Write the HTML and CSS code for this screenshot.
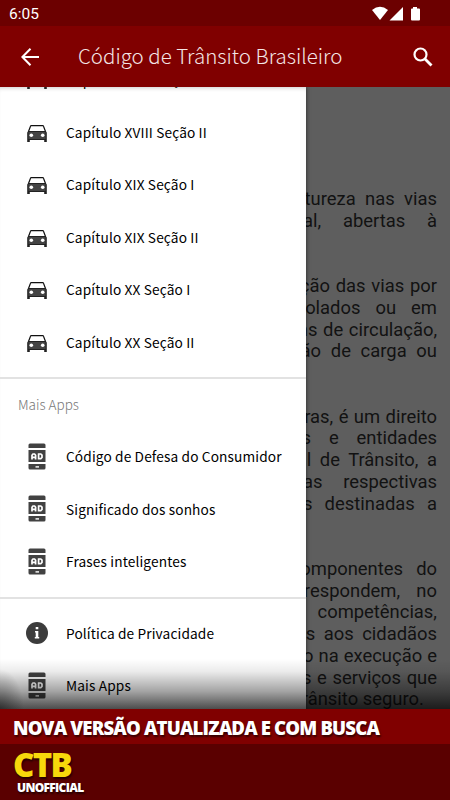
FILE: index.html
```html
<!DOCTYPE html>
<html lang="pt-BR">
<head>
    <meta charset="UTF-8">
    <meta name="viewport" content="width=device-width, initial-scale=1.0">
    <title>Código de Trânsito Brasileiro</title>
    <link rel="stylesheet" href="styles.css">
</head>
<body>
    <!-- shared icons -->
    <svg class="sprite">
        <symbol id="car" viewBox="0 0 20 17">
            <path fill="none" stroke="#111" stroke-width="1.200" d="M1.300 7 3.500 1.300Q3.700.700 4.300.700h11.400q.6 0 .8.6L18.700 7"/>
            <path fill="#222" d="M.2 7.500 1.500 6h17l1.300 1.500V17h-2.600v-2H2.800v2H.2z"/>
            <path fill="#444" d="M1.500 7h17v7h-17z"/>
            <circle cx="4.300" cy="10.200" r="1.800" fill="#fff"/>
            <circle cx="15.700" cy="10.200" r="1.800" fill="#fff"/>
        </symbol>
        <symbol id="ad" viewBox="0 0 18 27">
            <path fill="#424242" d="M.5 5V2Q.5.5 2 .5h14Q17.500.5 17.500 2v3zM.5 7h17v12H.5zM.5 21h17v4q0 1.500-1.500 1.500H2Q.5 26.500.5 25z"/>
            <path fill="none" stroke="#fff" stroke-width="1.700" d="M4 16.500v-4.300l1-1.200h1.600l1 1.200v4.300M4 14.400h3.600M10.600 10.900v4.800h2.200l1.200-1.200v-2.300l-1.200-1.200h-3"/>
            <path fill="#fff" d="M7.500 23.200h3.500v1.400H7.500z"/>
        </symbol>
    </svg>

    <div class="app">
        <div class="status-bar">
            <span>6:05</span>
            <svg class="status-icons" width="50" height="16" viewBox="0 0 50 16" fill="#fff">
                <path d="M0 4Q8-2.500 16 4L8 14z"/>
                <path d="M31 1v13.500H17.500z"/>
                <path d="M41 1h4v1.500h2q1 0 1 1v10q0 1-1 1h-7q-1 0-1-1v-10q0-1 1-1h1z"/>
            </svg>
        </div>
        <header class="toolbar">
            <svg width="18" height="18" viewBox="0 0 18 18" fill="none" stroke="#fff" stroke-width="2">
                <path d="M18 9H1.500M9.500.8 1.400 9l8.100 8.200"/>
            </svg>
            <h1>Código de Trânsito Brasileiro</h1>
            <svg class="search" width="20" height="20" viewBox="0 0 20 20" fill="none" stroke="#fff" stroke-width="2.200">
                <circle cx="7.500" cy="7.500" r="6"/>
                <path stroke-width="2.800" d="M11.800 11.800l6.700 6.700"/>
            </svg>
        </header>

        <main class="content">
            <article>
                <p>Art. 1º O trânsito de qualquer natureza nas vias<br>terrestres do território nacional, abertas à<br><span class="last">circulação, rege-se por este Código.</span></p>
                <p>§ 1º Considera-se trânsito a utilização das vias por<br>pessoas, veículos e animais, isolados ou em<br>grupos, conduzidos ou não, para fins de circulação,<br>parada, estacionamento e operação de carga ou<br><span class="last">descarga.</span></p>
                <p>§ 2º O trânsito, em condições seguras, é um direito<br>de todos e dever dos órgãos e entidades<br>componentes do Sistema Nacional de Trânsito, a<br>estes cabendo, no âmbito das respectivas<br>competências, adotar as medidas destinadas a<br><span class="last">assegurar esse direito.</span></p>
                <p>§ 3º Os órgãos e entidades componentes do<br>Sistema Nacional de Trânsito respondem, no<br>âmbito das respectivas competências,<br>objetivamente, por danos causados aos cidadãos<br>em virtude de ação, omissão ou erro na execução e<br>manutenção de programas, projetos e serviços que<br><span class="last">garantam o exercício do direito do trânsito seguro.</span></p>
            </article>
            <nav class="drawer">
                <ul>
                    <li><svg class="car"><use href="#car"/></svg>Capítulo XVIII Seção I</li>
                    <li><svg class="car"><use href="#car"/></svg>Capítulo XVIII Seção II</li>
                    <li><svg class="car"><use href="#car"/></svg>Capítulo XIX Seção I</li>
                    <li><svg class="car"><use href="#car"/></svg>Capítulo XIX Seção II</li>
                    <li><svg class="car"><use href="#car"/></svg>Capítulo XX Seção I</li>
                    <li><svg class="car"><use href="#car"/></svg>Capítulo XX Seção II</li>
                </ul>
                <h2>Mais Apps</h2>
                <ul>
                    <li><svg class="ad"><use href="#ad"/></svg>Código de Defesa do Consumidor</li>
                    <li><svg class="ad"><use href="#ad"/></svg>Significado dos sonhos</li>
                    <li><svg class="ad"><use href="#ad"/></svg>Frases inteligentes</li>
                </ul>
                <ul class="about">
                    <li>
                        <svg class="info" viewBox="0 0 22 22">
                            <circle cx="11" cy="11" r="11" fill="#3c3c3c"/>
                            <path fill="#fff" d="M9.700 5h2.600v2.300H9.700zM9 9h3.300v6h.9v1.500H8.800V15h.9v-4.500H9z"/>
                        </svg>Política de Privacidade
                    </li>
                    <li><svg class="ad"><use href="#ad"/></svg>Mais Apps</li>
                </ul>
            </nav>
            <div class="fade"></div>
        </main>

        <div class="banner">NOVA VERSÃO ATUALIZADA E COM BUSCA</div>
        <footer>
            <div class="brand">CTB</div>
            <div class="unofficial">UNOFFICIAL</div>
        </footer>
    </div>
</body>
</html>
```
FILE: styles.css
```css
body {
    margin: 0;
    font-family: "Noto Sans CJK SC", "Noto Sans", sans-serif;
}

.sprite {
    display: none;
}

.app {
    display: flex;
    flex-direction: column;
    width: 450px;
    height: 800px;
    overflow: hidden;
}

.status-bar {
    display: flex;
    justify-content: space-between;
    align-items: center;
    box-sizing: border-box;
    height: 26px;
    flex: none;
    padding: 2px 28px 0 9px;
    background: #6c0000;
    color: #fff;
    font: 15.500px Roboto, sans-serif;
}

.toolbar {
    display: flex;
    align-items: center;
    box-sizing: border-box;
    height: 61px;
    flex: none;
    padding: 0 17px 0 21px;
    background: #800000;
    color: #f4e6e6;
}

.toolbar h1 {
    margin: -4px 0 0 39px;
    font-size: 20.500px;
    font-weight: 300;
    line-height: 30px;
    white-space: nowrap;
}

.search {
    margin-left: auto;
}

.content {
    position: relative;
    height: 622px;
    flex: none;
    overflow: hidden;
    background: #5e5e5e;
}

article {
    padding: 101px 13px 0;
    color: #121212;
    font: 18.400px/21.750px Roboto, sans-serif;
    text-align: justify;
    text-align-last: justify;
    white-space: nowrap;
}

article p {
    margin: 0 0 21.750px;
}

.last {
    display: block;
    text-align-last: left;
}

.drawer {
    position: absolute;
    top: 0;
    left: 0;
    width: 306px;
    height: 622px;
    overflow: hidden;
    background: #fff;
    box-shadow: 0 0 4px rgba(0, 0, 0, 0.6), inset 0 4px 4px -3px rgba(0, 0, 0, 0.2);
}

.drawer ul {
    margin: 0;
    padding: 0;
    list-style: none;
}

.drawer ul:first-child {
    margin-top: -34px;
    padding-bottom: 9px;
}

.drawer li {
    display: flex;
    align-items: center;
    height: 52.500px;
    color: #000;
    font-size: 13.700px;
    letter-spacing: 0.130px;
    white-space: nowrap;
}

.drawer svg {
    flex: none;
}

.car {
    width: 20px;
    height: 17px;
    margin: 3px 19px 0 27px;
}

.ad {
    width: 18px;
    height: 27px;
    margin: 0 20px 0 28px;
}

.info {
    width: 22px;
    height: 22px;
    margin: 0 18px 0 26px;
}

.drawer h2 {
    margin: 0;
    height: 51px;
    padding-left: 18px;
    border-top: 2px solid #e2e2e2;
    color: #777;
    font-size: 13.500px;
    font-weight: 300;
    line-height: 51px;
}

.drawer .about {
    margin-top: 9px;
    padding-top: 8px;
    border-top: 2px solid #e2e2e2;
}

.fade {
    position: absolute;
    right: 0;
    bottom: 0;
    left: 0;
    height: 50px;
    background:
        radial-gradient(ellipse 24px 40px at 0 100%, rgba(0, 0, 0, 0.4), rgba(0, 0, 0, 0)),
        linear-gradient(rgba(0, 0, 0, 0), rgba(0, 0, 0, 0.08) 25%, rgba(0, 0, 0, 0.36) 65%, rgba(0, 0, 0, 0.7));
}

.banner {
    height: 35px;
    flex: none;
    padding-left: 13px;
    background: #800000;
    color: #fff;
    font: 800 18.600px/37px "Open Sans", sans-serif;
    letter-spacing: -0.850px;
    text-shadow: 1px 2px 2px rgba(0, 0, 0, 0.6);
    white-space: nowrap;
}

footer {
    height: 56px;
    padding-left: 13px;
    background: #5a0000;
    color: #fff;
    font-family: "Open Sans", sans-serif;
    font-weight: 800;
    text-shadow: 1px 2px 2px rgba(0, 0, 0, 0.6);
}

.brand {
    color: #f7d80b;
    font-size: 33px;
    line-height: 42px;
    letter-spacing: -1.700px;
}

.unofficial {
    margin-top: -6px;
    padding-left: 4px;
    font-size: 12px;
    line-height: 16px;
    letter-spacing: -0.700px;
}
```
